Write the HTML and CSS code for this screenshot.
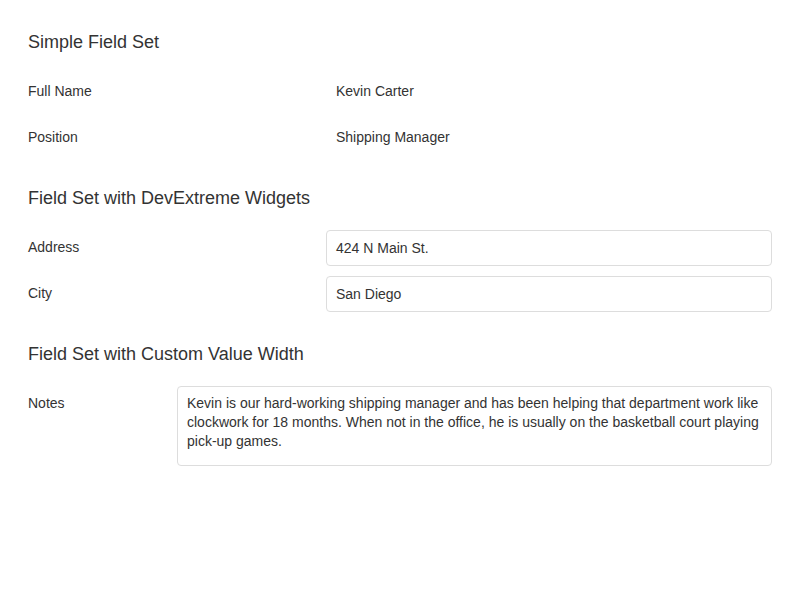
FILE: index.html
```html
<!DOCTYPE html>
<html>
<head>
<meta charset="utf-8">
<link rel="stylesheet" href="styles.css">
</head>
<body>
<div class="page">
  <section class="fieldset">
    <h2 class="fieldset-header">Simple Field Set</h2>
    <div class="field">
      <div class="field-label">Full Name</div>
      <div class="field-value plain">Kevin Carter</div>
    </div>
    <div class="field">
      <div class="field-label">Position</div>
      <div class="field-value plain">Shipping Manager</div>
    </div>
  </section>
  <section class="fieldset">
    <h2 class="fieldset-header">Field Set with DevExtreme Widgets</h2>
    <div class="field">
      <div class="field-label">Address</div>
      <div class="field-value"><div class="textbox">424 N Main St.</div></div>
    </div>
    <div class="field">
      <div class="field-label">City</div>
      <div class="field-value"><div class="textbox">San Diego</div></div>
    </div>
  </section>
  <section class="fieldset">
    <h2 class="fieldset-header">Field Set with Custom Value Width</h2>
    <div class="field custom">
      <div class="field-label">Notes</div>
      <div class="field-value"><div class="textarea">Kevin is our hard-working shipping manager and has been helping that department work like clockwork for 18 months. When not in the office, he is usually on the basketball court playing pick-up games.</div></div>
    </div>
  </section>
</div>
</body>
</html>
```
FILE: styles.css
```css
html, body {
  margin: 0;
  padding: 0;
  background: #fff;
}
body {
  font-family: "Liberation Sans", Arial, Helvetica, sans-serif;
  font-size: 14px;
  color: #333;
}
.page {
  padding: 31px 28px 0 28px;
}
.fieldset {
  display: flex;
  flex-direction: column;
  gap: 10px;
  margin-bottom: 31px;
}
.fieldset-header {
  margin: 0 0 11px 0;
  font-size: 18px;
  font-weight: normal;
  line-height: 22px;
  color: #333;
}
.field {
  display: flex;
  align-items: flex-start;
}
.field-label {
  flex: 0 0 298px;
  line-height: 18px;
  padding-top: 8px;
}
.custom .field-label {
  flex-basis: 149px;
}
.field-value {
  flex: 1 1 auto;
  min-width: 0;
}
.field-value.plain {
  padding: 8px 10px 10px 10px;
  line-height: 18px;
}
.textbox {
  border: 1px solid #ddd;
  border-radius: 4px;
  padding: 8px 9px;
  line-height: 18px;
  height: 18px;
}
.textarea {
  border: 1px solid #ddd;
  border-radius: 4px;
  padding: 7px 9px 7px 9px;
  line-height: 19px;
  height: 64px;
  box-sizing: content-box;
}
```
